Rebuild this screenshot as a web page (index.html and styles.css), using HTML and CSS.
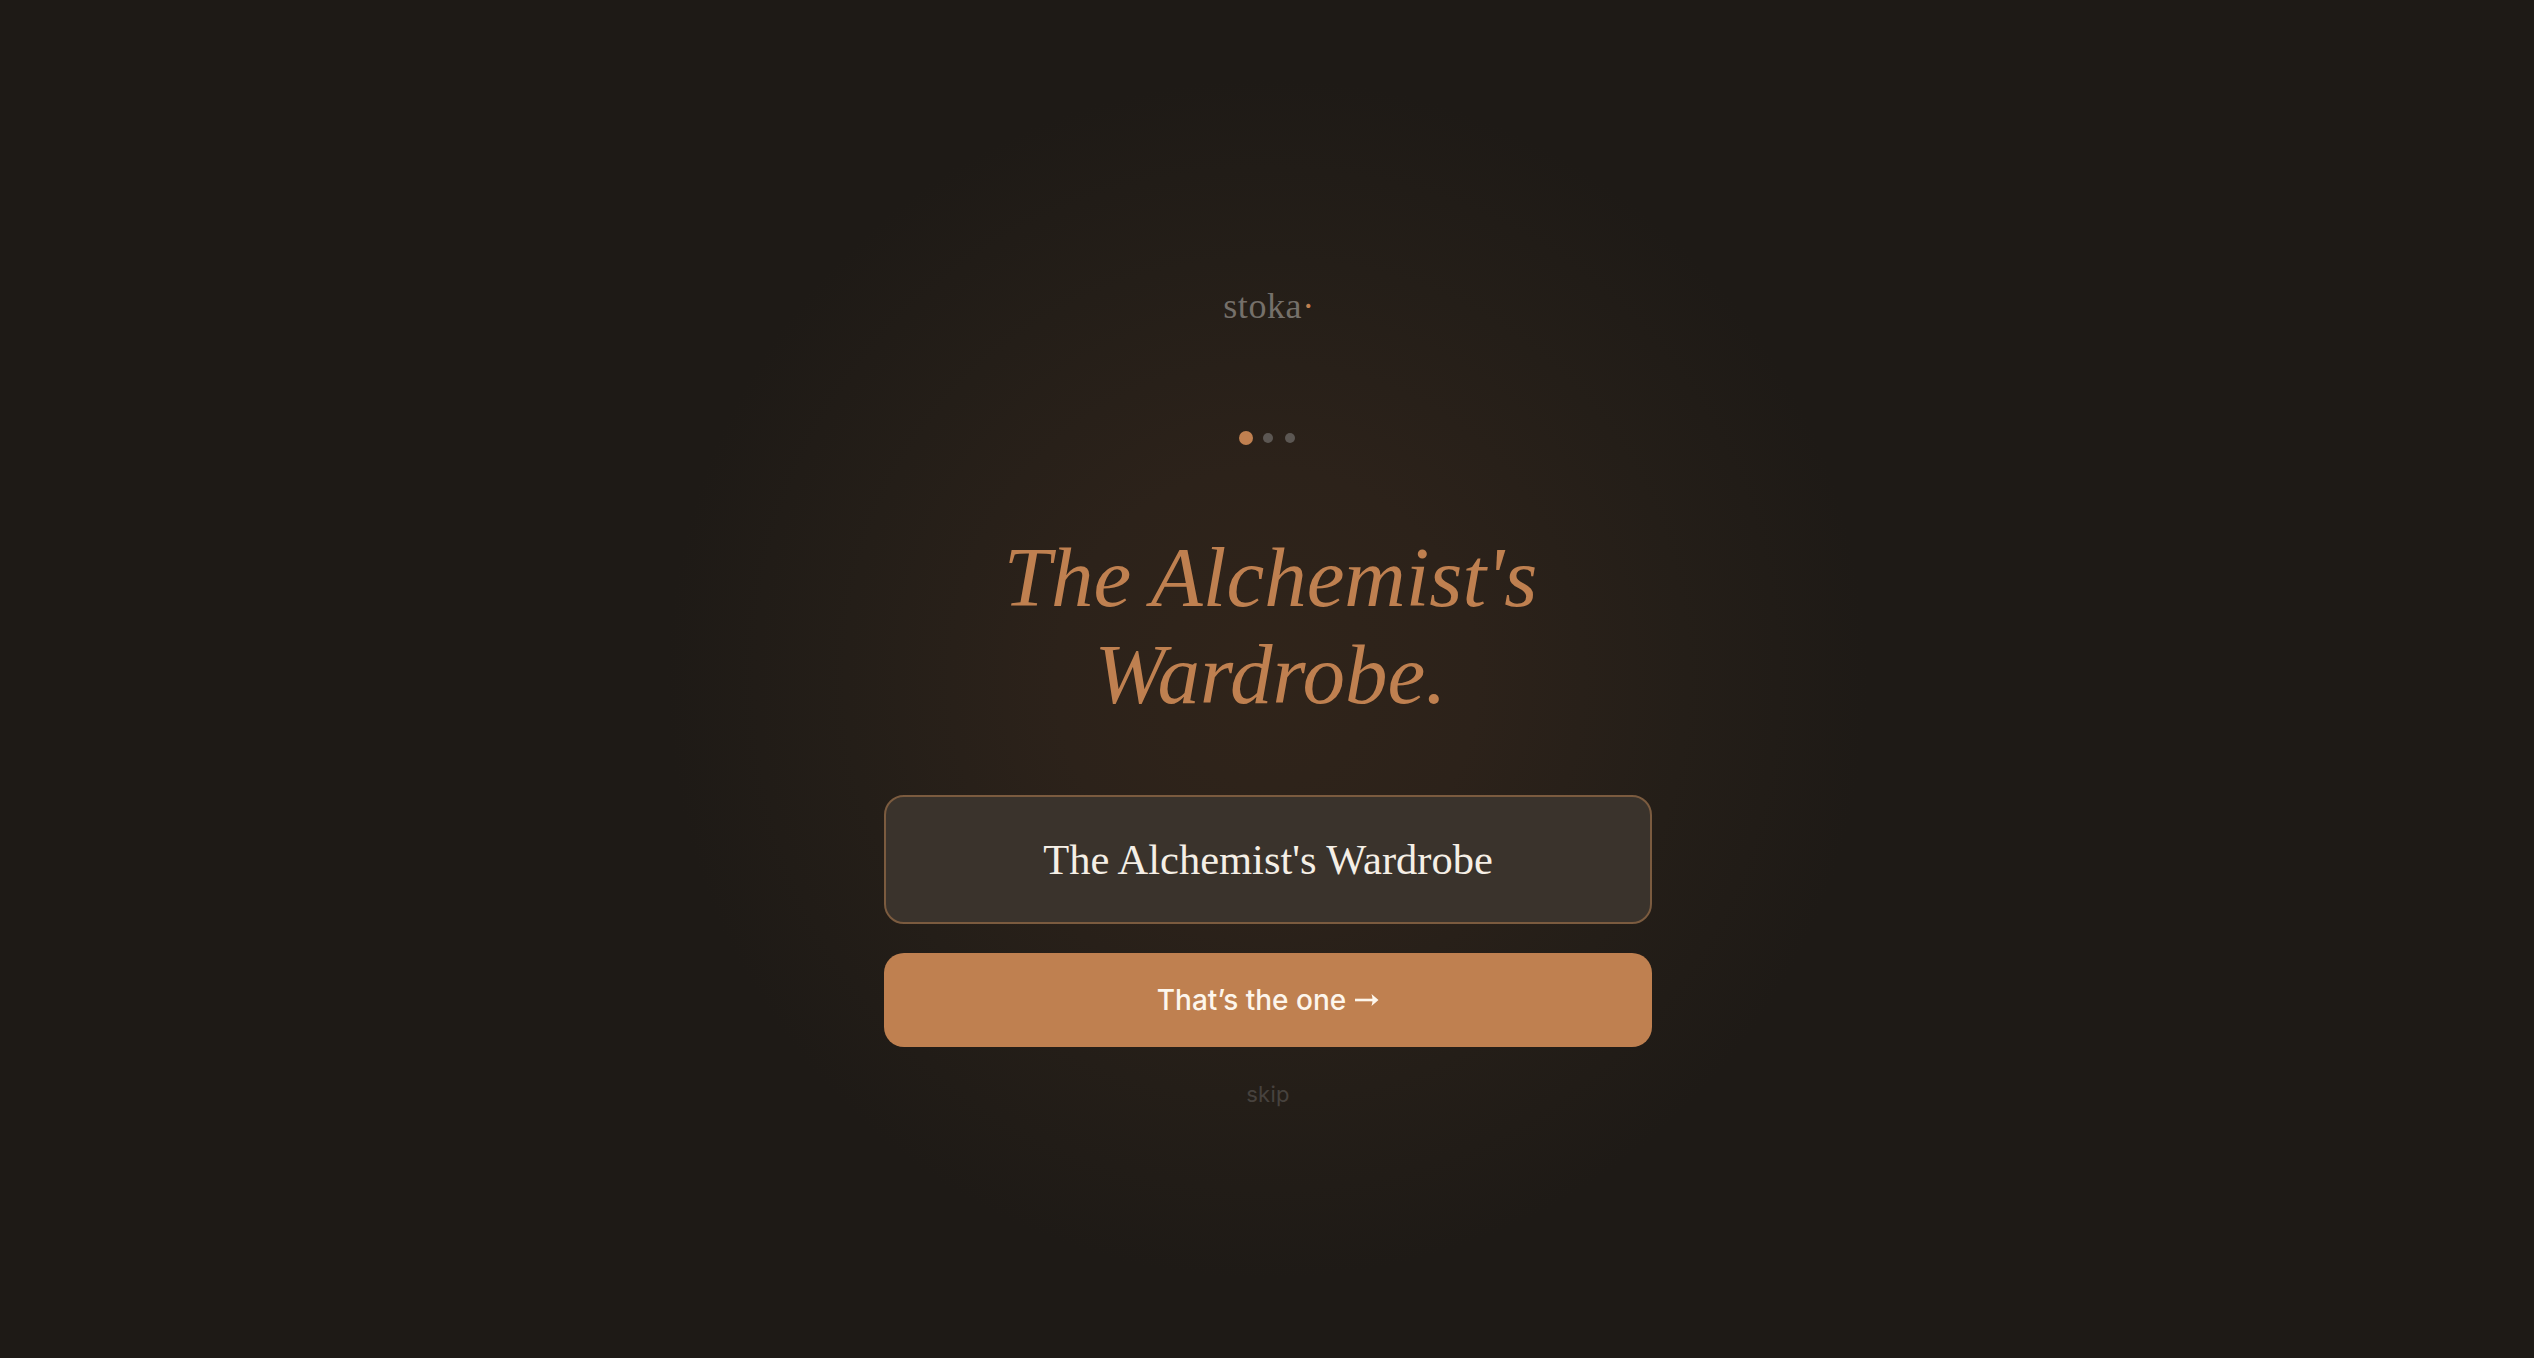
FILE: index.html
```html
<!DOCTYPE html>
<html lang="en">
<head>
<meta charset="utf-8">
<title>stoka</title>
<link rel="stylesheet" href="styles.css">
</head>
<body>
<main class="screen">
  <div class="logo">stoka<span class="logo-dot">·</span></div>
  <div class="steps">
    <span class="step step-active"></span>
    <span class="step"></span>
    <span class="step"></span>
  </div>
  <h1 class="title">The Alchemist's<br>Wardrobe.</h1>
  <div class="form">
    <input class="name" type="text" value="The Alchemist's Wardrobe">
    <button class="cta" type="button">
      <span>That’s the one</span>
      <svg class="arrow" viewBox="0 0 24 14" width="24" height="14" aria-hidden="true">
        <path d="M0 7H20" fill="none" stroke="currentColor" stroke-width="2.6"/>
        <path d="M16.5 1 L23.5 7 L16.5 13 Q18.5 7 16.5 1Z" fill="currentColor"/>
      </svg>
    </button>
    <button class="skip" type="button">skip</button>
  </div>
</main>
</body>
</html>
```
FILE: styles.css
```css
* { box-sizing: border-box; }
html, body { margin: 0; height: 100%; }
body {
  background: #1e1a16;
  overflow: hidden;
}
.screen {
  height: 1358px;
  display: flex;
  flex-direction: column;
  align-items: center;
  padding-top: 281px;
  background: radial-gradient(circle 600px at 50% 50%, #30241a 0%, #2c221a 35%, #241e18 70%, #1e1a16 100%);
}
.logo {
  font-family: "Liberation Serif", serif;
  font-size: 36px;
  line-height: 50px;
  letter-spacing: .6px;
  color: #75706a;
  height: 50px;
  margin-left: 4px;
}
.logo-dot { color: #c08050; }
.steps {
  display: flex;
  align-items: center;
  gap: 12px;
  margin-top: 99px;
  height: 16px;
}
.step {
  width: 10px;
  height: 10px;
  border-radius: 50%;
  background: #5c5753;
}
.step-active {
  width: 14px;
  height: 14px;
  margin-right: -2px;
  background: #c08050;
}
.title {
  margin: 83px 0 0;
  padding-left: 7px;
  font-family: "Liberation Serif", serif;
  font-style: italic;
  font-weight: 400;
  font-size: 85px;
  line-height: 97px;
  text-align: center;
  color: #bf8050;
}
.form {
  display: flex;
  flex-direction: column;
  align-items: center;
  width: 768px;
  margin: 72px 0 0 2px;
}
.name {
  width: 100%;
  height: 129px;
  border: 2px solid #7b5b3f;
  border-radius: 20px;
  background: #3a332c;
  text-align: center;
  font-family: "Liberation Serif", serif;
  font-size: 42.5px;
  color: #f5efe6;
  outline: none;
}
.cta {
  display: flex;
  align-items: center;
  justify-content: center;
  gap: 9px;
  width: 100%;
  height: 94px;
  margin-top: 29px;
  border: 0;
  border-radius: 20px;
  background: #bf8050;
  font-family: Inter, sans-serif;
  font-size: 28px;
  font-weight: 500;
  color: #fdf6ec;
}
.arrow { display: block; }
.skip {
  margin-top: 32px;
  border: 0;
  padding: 0;
  background: none;
  font-family: Inter, sans-serif;
  font-size: 22px;
  line-height: 30px;
  letter-spacing: .3px;
  color: #47423e;
}
```
